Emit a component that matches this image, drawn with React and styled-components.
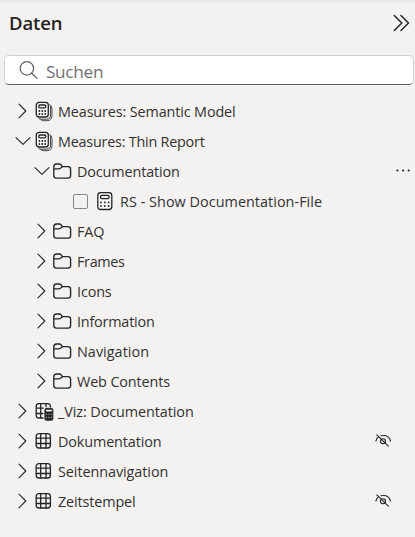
import React from "react";
import styled, { createGlobalStyle } from "styled-components";

const GlobalStyle = createGlobalStyle`
  * { box-sizing: border-box; }
  body {
    margin: 0;
    background: #f3f2f1;
    color: #252423;
    font-family: "Open Sans", "Noto Sans", sans-serif;
  }
`;

const Pane = styled.section`
  height: 537px;
  overflow: hidden;
  background: linear-gradient(#e6e5e4, #f3f2f1 4px);
`;

const Header = styled.header`
  display: flex;
  align-items: center;
  justify-content: space-between;
  height: 55px;
  padding: 0 5px 9px 9px;
`;

const Title = styled.h1`
  margin: 0;
  font-size: 18.5px;
  line-height: 26px;
  font-weight: 600;
  letter-spacing: -0.1px;
`;

const CollapseButton = styled.button`
  display: flex;
  padding: 0;
  border: 0;
  background: none;
  color: #252423;
`;

const SearchBox = styled.label`
  display: flex;
  align-items: center;
  gap: 7px;
  height: 30px;
  margin: 0 1px 0 4px;
  padding-left: 14px;
  border: 1px solid #d1d1d1;
  border-bottom-color: #616161;
  border-radius: 5px;
  background: #fff;
  color: #616161;
`;

const SearchInput = styled.input`
  flex: 1;
  min-width: 0;
  height: 26px;
  margin-top: 2px;
  padding: 0;
  border: 0;
  outline: 0;
  background: transparent;
  font: 17.2px "Open Sans", "Noto Sans", sans-serif;
  letter-spacing: -0.3px;
  &::placeholder { color: #707070; opacity: 1; }
`;

const Tree = styled.ul`
  list-style: none;
  margin: 0;
  padding: 11px 0 0;
`;

const Row = styled.li`
  display: flex;
  align-items: center;
  height: 30px;
  padding-left: ${(p) => 14 + p.$level * 19}px;
`;

const IconSlot = styled.span`
  display: flex;
  width: ${(p) => (p.$nested ? 24 : 23)}px;
  height: 22px;
  margin-left: ${(p) => (p.$nested ? 3 : 4)}px;
  align-items: center;
`;

const Glyph = styled.svg`
  display: block;
  flex: none;
  fill: none;
  stroke: currentColor;
  stroke-width: ${(p) => p.$weight || 1.3};
  stroke-linecap: round;
  stroke-linejoin: round;
`;

const Checkbox = styled.span`
  width: 15px;
  height: 15px;
  margin: 1px 5px 0 2px;
  border: 1px solid #8a8886;
  border-radius: 2px;
`;

const Label = styled.span`
  padding-top: 2px;
  font-size: 14.4px;
  line-height: 20px;
  white-space: nowrap;
  color: #323130;
  letter-spacing: ${(p) => p.$tracking}px;
`;

const Trailing = styled.span`
  display: flex;
  margin-left: auto;
  padding-right: ${(p) => (p.$menu ? 3 : 23)}px;
`;

function Chevron({ open }) {
  return (
    <Glyph width="17" height="16" viewBox="0 0 17 16" $weight={1.1}>
      <path d={open ? "M2 4.6 9 11.3 16 4.6" : "M5 1.2 11.8 8 5 14.8"} />
    </Glyph>
  );
}

function Keys({ x, y, dx, dy }) {
  return [0, 1, 2].flatMap((c) =>
    [0, 1].map((r) => (
      <circle key={`${c}${r}`} cx={x + c * dx} cy={y + r * dy} r="0.9" fill="currentColor" stroke="none" />
    ))
  );
}

const icons = {
  measures: (
    <Glyph width="20" height="22" viewBox="0 0 20 22">
      <rect x="1.3" y="2.4" width="12" height="14.6" rx="2.7" />
      <rect x="3.8" y="5" width="7" height="2.8" rx="1.3" />
      <Keys x={4.4} y={11} dx={2.9} dy={3} />
      <path d="M14.8 4.6Q15.6 5.4 15.6 6.8V15Q15.6 19.2 11.5 19.2H6Q4.4 19.2 3.7 18.4" strokeWidth="0.9" />
      <path d="M16 5.8Q17 6.9 17 8.8V15.6Q17 20.7 12 20.7H8.8Q7 20.7 6 19.8" strokeWidth="0.8" />
    </Glyph>
  ),
  measure: (
    <Glyph width="18" height="22" viewBox="0 0 18 22">
      <rect x="1.8" y="2.7" width="14" height="16.8" rx="2.8" />
      <rect x="4.5" y="5.3" width="8.6" height="3.4" rx="1.4" />
      <Keys x={5} y={12.4} dx={3.8} dy={3.6} />
    </Glyph>
  ),
  folder: (
    <Glyph width="19" height="22" viewBox="0 0 19 22" $weight={1.35}>
      <path d="M.8 6.9Q.8 4 3.5 4H6Q7.5 4 8.4 5.2L9.3 6.6H15Q17.6 6.6 17.6 9.2V15.5Q17.6 18.1 15 18.1H3.5Q.8 18.1 .8 15.5Z" />
      <path d="M1 8.9H5.6Q7.4 8.9 8.3 7.7L9.3 6.6" />
    </Glyph>
  ),
  table: (
    <Glyph width="18" height="22" viewBox="0 0 18 22">
      <rect x="1.2" y="3.6" width="14.2" height="14.4" rx="2.7" />
      <path d="M5.7 3.6V18M11 3.6V18M1.2 8.1H15.4M1.2 13.5H15.4" />
    </Glyph>
  ),
  tableMeasure: (
    <Glyph width="20" height="22" viewBox="0 0 20 22">
      <path d="M8 18H4Q1.2 18 1.2 15.2V6.4Q1.2 3.6 4 3.6H12.6Q15.4 3.6 15.4 6.4V6.8M5.7 3.6V18M11 3.6V6.4M1.2 8.1H8.4M1.2 13.5H8" />
      <rect x="9.9" y="8.3" width="8" height="12" rx="1.5" fill="currentColor" strokeWidth=".9" />
      <path d="M11.7 10.6H16.2" stroke="#f3f2f1" strokeWidth="1.6" />
      <path d="M11.4 14.4H12M13.6 14.4H14.2M15.9 14.4H16.5M11.4 17.5H12M13.6 17.5H14.2M15.9 17.5H16.5" stroke="#f3f2f1" strokeWidth="1.3" strokeLinecap="butt" />
    </Glyph>
  ),
};

function HiddenIcon() {
  return (
    <Glyph width="17" height="16" viewBox="0 0 17 16" $weight={1.1}>
      <path d="M.9 8Q1.7 4.8 3.6 3.7M6 2.8Q13.6 1.2 15.5 8M1.8 1.8 13.3 13.1" />
      <circle cx="8" cy="8.2" r="2.5" />
    </Glyph>
  );
}

function MoreIcon() {
  return (
    <Glyph width="17" height="6" viewBox="0 0 17 6">
      {[2.4, 8.1, 13.7].map((x) => (
        <circle key={x} cx={x} cy="2.5" r="1.1" fill="currentColor" stroke="none" />
      ))}
    </Glyph>
  );
}

const rows = [
  { label: "Measures: Semantic Model", level: 0, icon: "measures", tracking: -0.13 },
  { label: "Measures: Thin Report", level: 0, icon: "measures", open: true, tracking: -0.23 },
  { label: "Documentation", level: 1, icon: "folder", open: true, more: true, tracking: -0.13 },
  { label: "RS - Show Documentation-File", level: 3, icon: "measure", leaf: true, tracking: 0.04 },
  { label: "FAQ", level: 1, icon: "folder", tracking: -0.13 },
  { label: "Frames", level: 1, icon: "folder", tracking: -0.33 },
  { label: "Icons", level: 1, icon: "folder", tracking: -0.13 },
  { label: "Information", level: 1, icon: "folder", tracking: -0.2 },
  { label: "Navigation", level: 1, icon: "folder", tracking: 0.03 },
  { label: "Web Contents", level: 1, icon: "folder", tracking: -0.13 },
  { label: "_Viz: Documentation", level: 0, icon: "tableMeasure", tracking: -0.08 },
  { label: "Dokumentation", level: 0, icon: "table", hidden: true, tracking: -0.13 },
  { label: "Seitennavigation", level: 0, icon: "table", tracking: -0.07 },
  { label: "Zeitstempel", level: 0, icon: "table", hidden: true, tracking: -0.13 },
];

export default function App() {
  return (
    <Pane>
      <GlobalStyle />
      <Header>
        <Title>Daten</Title>
        <CollapseButton aria-label="Collapse">
          <Glyph width="17" height="18" viewBox="0 0 17 18" $weight={1.5}>
            <path d="M1.3 1.5 8.8 9 1.3 16.5M8 1.5 15.5 9 8 16.5" />
          </Glyph>
        </CollapseButton>
      </Header>
      <SearchBox>
        <Glyph width="20" height="20" viewBox="0 0 20 20" $weight={1.3}>
          <circle cx="7.9" cy="8.4" r="6.7" />
          <path d="M12.7 13.2 18 18.4" />
        </Glyph>
        <SearchInput placeholder="Suchen" />
      </SearchBox>
      <Tree>
        {rows.map((r) => (
          <Row key={r.label} $level={r.level}>
            {r.leaf ? <Checkbox /> : <Chevron open={r.open} />}
            <IconSlot $nested={r.level > 0}>{icons[r.icon]}</IconSlot>
            <Label $tracking={r.tracking}>{r.label}</Label>
            {r.more && <Trailing $menu><MoreIcon /></Trailing>}
            {r.hidden && <Trailing><HiddenIcon /></Trailing>}
          </Row>
        ))}
      </Tree>
    </Pane>
  );
}
